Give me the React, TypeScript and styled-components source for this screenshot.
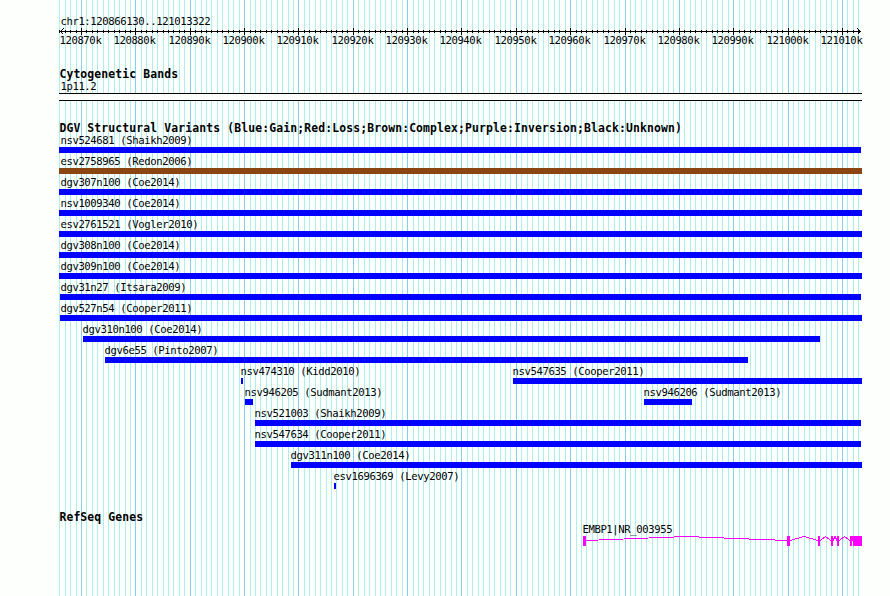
import React, { FC } from 'react';
import styled, { createGlobalStyle } from 'styled-components';

const LEFT = 59;
const WIDTH = 803;
const PX_PER_KB = 800 / 147.192;

// plot x of a position given in kb after 120000
const kbToX = (kb: number) => Math.round(1 + (kb - 866.13) * PX_PER_KB);

const ticks = Array.from({ length: 148 }, (_, i) => 866 + i).map(kb => ({
  kb,
  x: kbToX(kb),
  major: kb % 10 === 0,
}));

interface FeatureType {
  name: string;
  start: number;
  end: number;
  color?: string;
}

const variantRows: FeatureType[][] = [
  [{ name: 'nsv524681 (Shaikh2009)', start: 59, end: 861 }],
  [{ name: 'esv2758965 (Redon2006)', start: 59, end: 862, color: '#8b4513' }],
  [{ name: 'dgv307n100 (Coe2014)', start: 59, end: 862 }],
  [{ name: 'nsv1009340 (Coe2014)', start: 59, end: 862 }],
  [{ name: 'esv2761521 (Vogler2010)', start: 59, end: 862 }],
  [{ name: 'dgv308n100 (Coe2014)', start: 59, end: 862 }],
  [{ name: 'dgv309n100 (Coe2014)', start: 59, end: 862 }],
  [{ name: 'dgv31n27 (Itsara2009)', start: 60, end: 861 }],
  [{ name: 'dgv527n54 (Cooper2011)', start: 60, end: 862 }],
  [{ name: 'dgv310n100 (Coe2014)', start: 83, end: 820 }],
  [{ name: 'dgv6e55 (Pinto2007)', start: 105, end: 748 }],
  [
    { name: 'nsv474310 (Kidd2010)', start: 241, end: 243 },
    { name: 'nsv547635 (Cooper2011)', start: 513, end: 862 },
  ],
  [
    { name: 'nsv946205 (Sudmant2013)', start: 245, end: 253 },
    { name: 'nsv946206 (Sudmant2013)', start: 644, end: 692 },
  ],
  [{ name: 'nsv521003 (Shaikh2009)', start: 255, end: 861 }],
  [{ name: 'nsv547634 (Cooper2011)', start: 255, end: 861 }],
  [{ name: 'dgv311n100 (Coe2014)', start: 291, end: 862 }],
  [{ name: 'esv1696369 (Levy2007)', start: 334, end: 336 }],
];

const exons = [
  [583, 586],
  [787, 790],
  [818, 820],
  [831, 833],
  [837, 839],
  [850, 852],
  [853, 862],
];

const GlobalStyle = createGlobalStyle`
  body {
    margin: 0;
    background: #fdfffc;
  }
`;

const Browser = styled.main`
  position: relative;
  box-sizing: border-box;
  width: 890px;
  height: 596px;
  padding: 15px 0 0 ${LEFT}px;
  overflow: hidden;
  color: #000;
  font-family: 'DejaVu Sans Mono', 'Liberation Mono', monospace;
`;

const GridLines = styled.svg`
  position: absolute;
  top: 0;
  left: ${LEFT}px;
`;

const Content = styled.div`
  position: relative;
  display: flex;
  flex-direction: column;
  width: ${WIDTH}px;
`;

const Label = styled.div<{ $shift?: number }>`
  height: 12px;
  margin-left: ${p => (p.$shift ?? 1) + 0.4}px;
  font-size: 10.6px;
  line-height: 12px;
  letter-spacing: -0.382px;
  white-space: pre;
`;

const Heading = styled.h2`
  height: 12px;
  margin: 0 0 0 0.4px;
  font-size: 11.4px;
  line-height: 12px;
  letter-spacing: 0.137px;
  white-space: pre;
`;

const Ruler = styled.svg`
  display: block;
  height: 8px;
  margin-bottom: -1px;
  overflow: visible;
`;

const RulerLabels = styled.div`
  display: grid;
  height: 12px;
  margin-bottom: 22px;
`;

const RulerLabel = styled(Label)`
  grid-area: 1 / 1;
  width: 42px;
`;

const Band = styled.div`
  box-sizing: border-box;
  height: 8px;
  margin: 1px 0 21px;
  border: solid #000;
  border-width: 1px 0;
  background: #fdfffc;
`;

const Row = styled.div`
  display: grid;
  height: 21px;
`;

const Feature = styled.div<{ $start: number; $width: number }>`
  grid-area: 1 / 1;
  width: ${p => p.$width}px;
  margin-left: ${p => p.$start}px;
`;

const Bar = styled.div<{ $color: string }>`
  height: 6px;
  margin-top: 1px;
  background: ${p => p.$color};
`;

const Tracks = styled.section`
  margin-bottom: 20px;
`;

const GeneModel = styled.svg`
  display: block;
  margin-top: 1px;
`;

const Scale: FC = () => (
  <>
    <Ruler width={WIDTH} height={8} shapeRendering='crispEdges'>
      <rect x={1} y={4} width={801} height={1} />
      {ticks.map(({ kb, x, major }) => (
        <rect
          key={kb}
          x={x}
          y={major ? 1 : 3}
          width={1}
          height={major ? 7 : 3}
        />
      ))}
      <path
        d='M4.5 1.5 L1.5 4.5 L4.5 7.5 M798.5 1.5 L801.5 4.5 L798.5 7.5'
        fill='none'
        stroke='#000'
      />
    </Ruler>
    <RulerLabels>
      {ticks
        .filter(t => t.major)
        .map(({ kb, x }) => (
          <RulerLabel key={kb} $shift={x - 22}>
            {120000 + kb}k
          </RulerLabel>
        ))}
    </RulerLabels>
  </>
);

const VariantRow: FC<{ features: FeatureType[] }> = ({ features }) => (
  <Row>
    {features.map(({ name, start, end, color }) => (
      <Feature key={name} $start={start - LEFT} $width={end - start}>
        <Label $shift={start > 60 ? -1 : 60 - start}>{name}</Label>
        <Bar $color={color || '#0000ff'} />
      </Feature>
    ))}
  </Row>
);

const Gene: FC = () => (
  <GeneModel width={WIDTH} height={10} shapeRendering='crispEdges'>
    {exons.map(([start, end], i) => {
      const next = exons[i + 1];
      const from = end - LEFT;
      const to = next ? next[0] - LEFT : from;
      return (
        <g key={start}>
          {next && (
            <polyline
              points={`${from},4.5 ${(from + to) / 2},0.5 ${to},4.5`}
              fill='none'
              stroke='#ff00ff'
            />
          )}
          <rect
            x={start - LEFT}
            width={end - start}
            height={10}
            fill='#ff00ff'
          />
        </g>
      );
    })}
  </GeneModel>
);

const App: FC = () => (
  <>
    <GlobalStyle />
    <Browser>
      <GridLines width={WIDTH} height={596} shapeRendering='crispEdges'>
        {ticks.map(({ kb, x, major }) => (
          <rect
            key={kb}
            x={x}
            width={1}
            height={596}
            fill={major ? '#87ceeb' : '#afeeee'}
          />
        ))}
      </GridLines>
      <Content>
        <Label>chr1:120866130..121013322</Label>
        <Scale />
        <Heading>Cytogenetic Bands</Heading>
        <Label>1p11.2</Label>
        <Band />
        <Tracks>
          <Heading>
            DGV Structural Variants
            (Blue:Gain;Red:Loss;Brown:Complex;Purple:Inversion;Black:Unknown)
          </Heading>
          {variantRows.map(features => (
            <VariantRow key={features[0].name} features={features} />
          ))}
        </Tracks>
        <section>
          <Heading>RefSeq Genes</Heading>
          <Label $shift={523}>EMBP1|NR_003955</Label>
          <Gene />
        </section>
      </Content>
    </Browser>
  </>
);

export default App;
